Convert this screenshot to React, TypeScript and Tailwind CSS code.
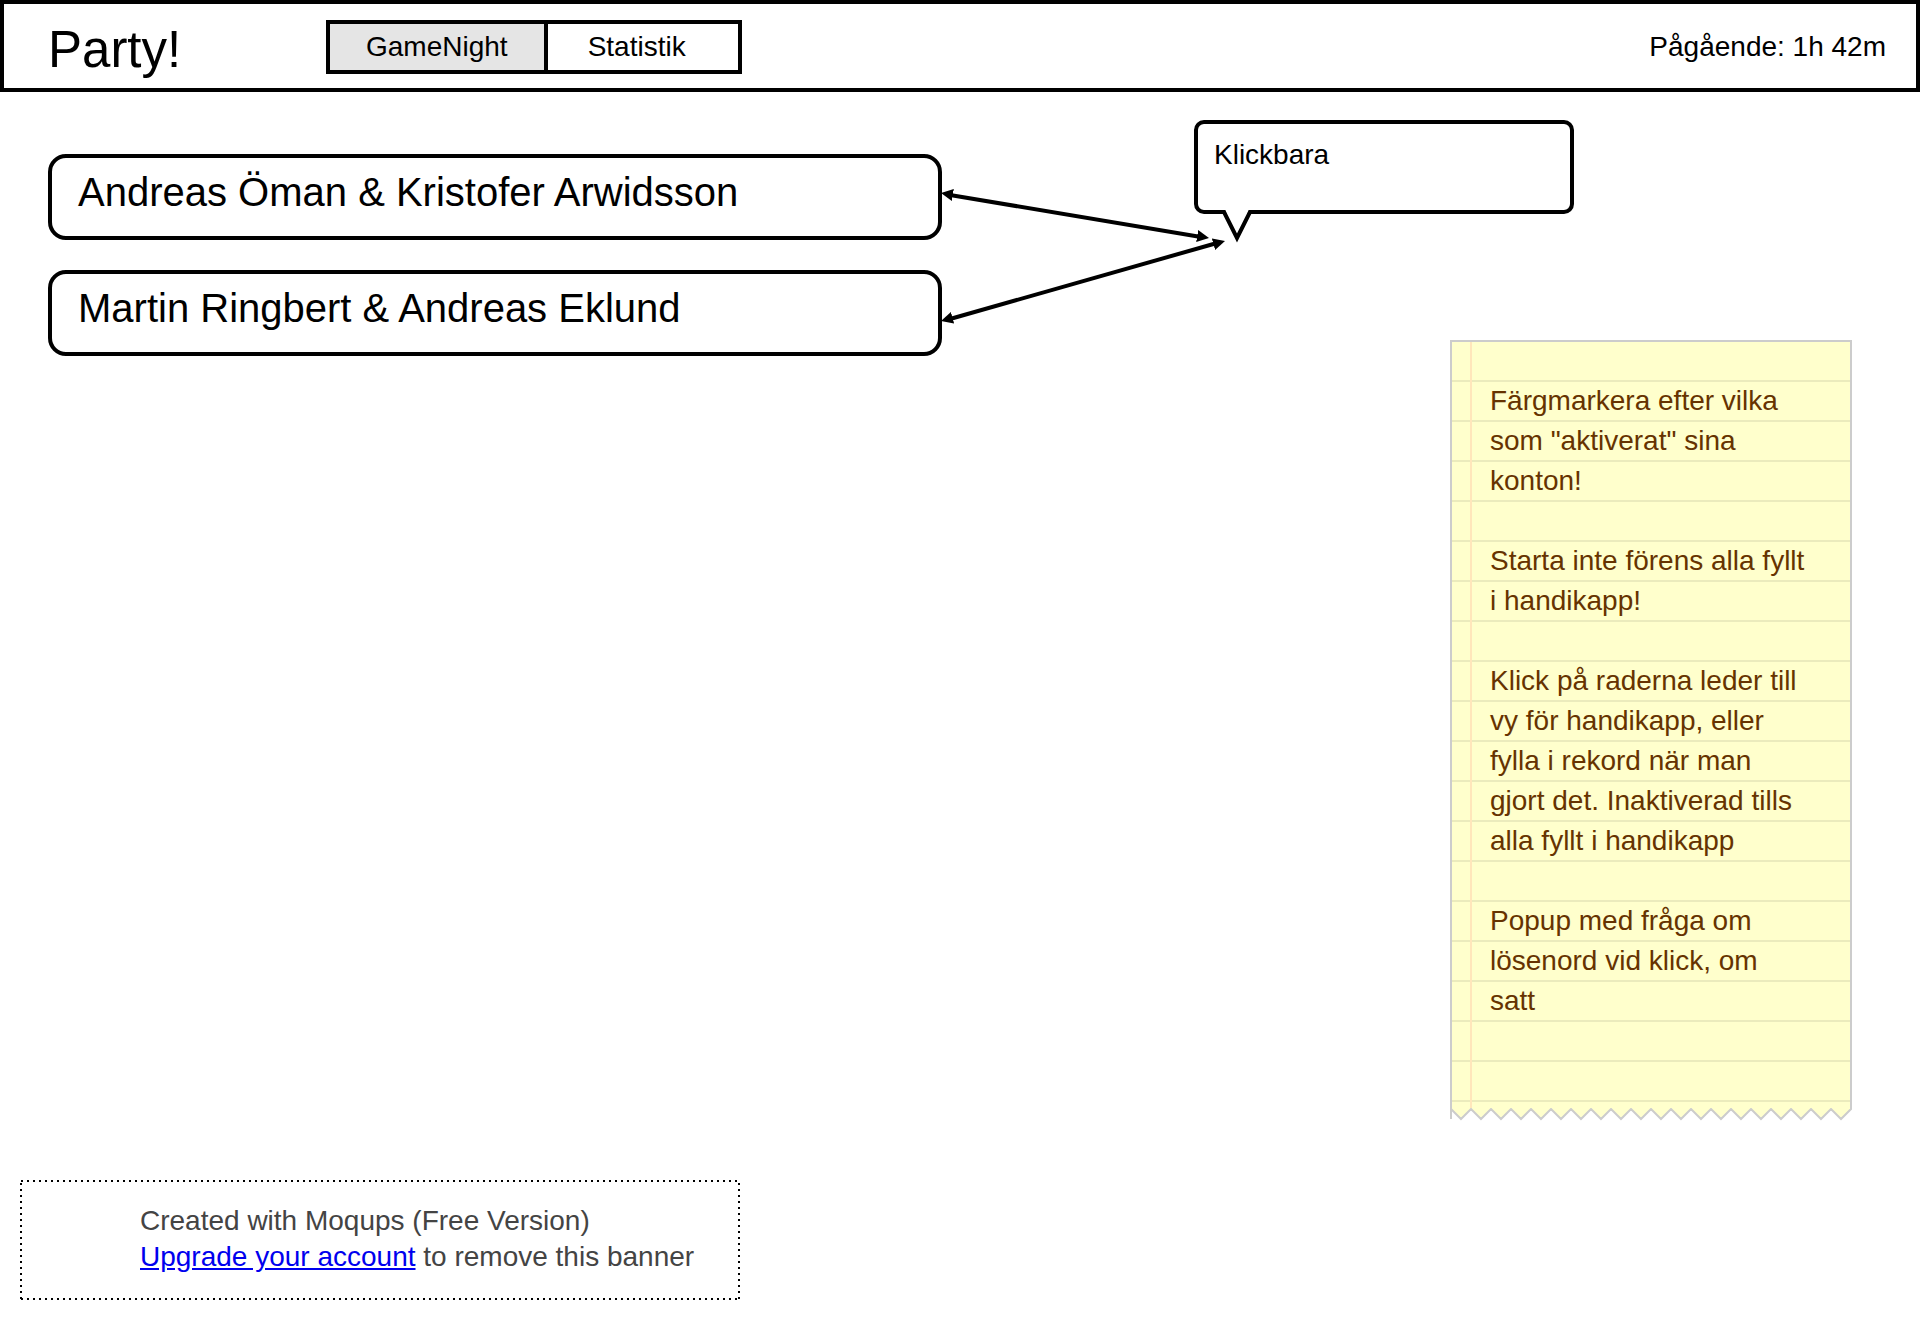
import React from "react";

const teams = ["Andreas Öman & Kristofer Arwidsson", "Martin Ringbert & Andreas Eklund"];

const notes = [
  'Färgmarkera efter vilka\nsom "aktiverat" sina\nkonton!',
  "Starta inte förens alla fyllt\ni handikapp!",
  "Klick på raderna leder till\nvy för handikapp, eller\nfylla i rekord när man\ngjort det. Inaktiverad tills\nalla fyllt i handikapp",
  "Popup med fråga om\nlösenord vid klick, om\nsatt",
];

// Zigzag edge: 20 teeth, each 20px wide and 10px deep.
const teeth = Array.from({ length: 20 }, (_, i) => `L${11 + i * 20} 11 L${21 + i * 20} 1`).join(" ");

function Header() {
  return (
    <header className="flex h-[92px] items-center border-4 border-black pr-[30px] pl-11">
      <h1 className="w-[278px] pt-2 text-[51px] leading-[60px]">Party!</h1>
      <nav className="mt-[2px] flex border-4 border-black">
        <button type="button" className="h-[46px] bg-[#e5e5e5] px-9 leading-8">
          GameNight
        </button>
        <button type="button" className="h-[46px] border-l-4 border-black bg-white pr-[52px] pl-10 leading-8">
          Statistik
        </button>
      </nav>
      <p className="mt-[2px] ml-auto leading-8">Pågående: 1h 42m</p>
    </header>
  );
}

function Arrows() {
  return (
    <svg className="h-[240px] w-[252px] shrink-0 overflow-visible" aria-hidden="true">
      <defs>
        <marker
          id="head"
          markerUnits="userSpaceOnUse"
          markerWidth="12"
          markerHeight="12"
          refX="12"
          refY="6"
          orient="auto-start-reverse"
        >
          <path d="M0 0 L12 6 L0 12 Z" />
        </marker>
      </defs>
      <g stroke="#000" strokeWidth="4">
        <path d="M8 75 L259 117" />
        <path d="M8 199 L275 123" />
      </g>
      <g stroke="none" fill="none">
        <path d="M-1 73 L267 118" markerStart="url(#head)" markerEnd="url(#head)" />
        <path d="M-1 201 L283 121" markerStart="url(#head)" markerEnd="url(#head)" />
      </g>
    </svg>
  );
}

function Callout() {
  return (
    <div className="relative h-[94px] w-[380px] rounded-[10px] border-4 border-black px-4 pt-[13px] leading-9">
      Klickbara
      <svg className="absolute top-[86px] left-[-4px] h-9 w-20" aria-hidden="true">
        <path d="M31 0 H55 L43 27 Z" fill="#fff" />
        <path d="M27 2 H30 L43 28 L56 2 H59" fill="none" stroke="#000" strokeWidth="4" strokeMiterlimit="10" />
      </svg>
    </div>
  );
}

function Note() {
  return (
    <aside className="mt-[126px] w-[402px] self-end text-[#663300]">
      <div className="relative flex min-h-[768px] flex-col gap-10 border-2 border-b-0 border-[#cccccc] bg-[#ffffcc] bg-[repeating-linear-gradient(to_bottom,transparent_0px,transparent_38px,#ebebbc_38px,#ebebbc_40px)] pt-[39px] pl-[38px] leading-10">
        <span className="absolute inset-y-0 left-[18px] w-[2px] bg-[#ffe6bb]" />
        {notes.map((text) => (
          <p key={text} className="whitespace-pre-line">
            {text}
          </p>
        ))}
      </div>
      <svg className="block h-[14px] w-full" aria-hidden="true">
        <path d={`M1 0 V1 ${teeth} V0 Z`} fill="#ffffcc" />
        <path d={`M1 1 ${teeth} V0`} fill="none" stroke="#cccccc" strokeWidth="2" />
        <path d="M1 0 V11" stroke="#cccccc" strokeWidth="2" />
      </svg>
    </aside>
  );
}

function Banner() {
  return (
    <footer className="relative mx-5 mt-[58px] mb-5 h-[120px] w-[720px] pt-[23px] pl-[120px] leading-9 text-[#444444]">
      <svg className="pointer-events-none absolute inset-0 size-full" aria-hidden="true">
        <path
          d="M1 1 H719 M1 119 H719 M1 3 V119 M719 3 V119"
          fill="none"
          stroke="#000"
          strokeWidth="2"
          strokeDasharray="2 4"
        />
      </svg>
      <p>Created with Moqups (Free Version)</p>
      <p>
        <a href="#upgrade" className="text-[#0000ee] underline">
          Upgrade your account
        </a>{" "}
        to remove this banner
      </p>
    </footer>
  );
}

export default function App() {
  return (
    <div className="bg-white font-['Liberation_Sans',Arial,sans-serif] text-[28px] text-black">
      <Header />
      <main className="flex pt-7 pr-[68px] pl-12">
        <ul className="flex flex-1 flex-col gap-[30px] pt-[34px]">
          {teams.map((team) => (
            <li key={team}>
              <button
                type="button"
                className="block w-full rounded-[18px] border-4 border-black px-[26px] pt-[10px] pb-5 text-left text-[40px] leading-[48px]"
              >
                {team}
              </button>
            </li>
          ))}
        </ul>
        <Arrows />
        <div className="flex w-[658px] shrink-0 flex-col">
          <Callout />
          <Note />
        </div>
      </main>
      <Banner />
    </div>
  );
}
